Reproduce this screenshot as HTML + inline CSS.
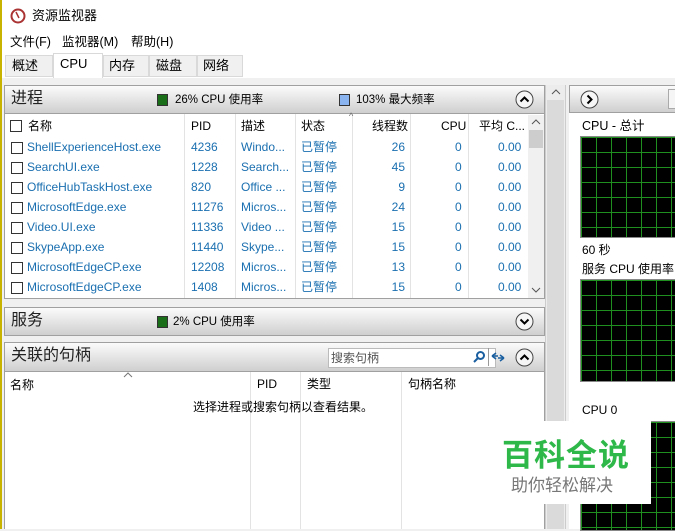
<!DOCTYPE html>
<html><head><meta charset="utf-8"><style>
*{margin:0;padding:0;box-sizing:border-box}
body{width:675px;height:529px;overflow:hidden;background:#f0f0f0;font-family:"Liberation Sans","Noto Sans CJK SC",sans-serif;font-size:12px;line-height:14px;color:#000;position:relative}
.a{position:absolute;white-space:nowrap}
.hdr{position:absolute;background:linear-gradient(#fbfbfb,#cfcfcf);border:1px solid #a0a0a0}
.hdr .t{position:absolute;left:6px;top:4px;font-size:16px;line-height:18px;color:#222}
.btn{position:absolute;width:19px;height:19px}
.row{position:absolute;left:5px;width:523px;height:20px;color:#1a6fb0}
.row span{position:absolute;top:2px}
.cb{position:absolute;width:12px;height:12px;border:1px solid #333;background:#fff}
.graph{position:absolute;background-color:#000;border:1px solid #888;background-image:linear-gradient(90deg,#1f8f1f 1px,transparent 1px),linear-gradient(#1f8f1f 1px,transparent 1px);background-size:15px 100%,100% 15px}
.vl{position:absolute;width:1px;background:#e3e3e3}
</style></head><body>
<svg width="0" height="0" style="position:absolute"><defs>
<symbol id="up" viewBox="0 0 19 19"><circle cx="9.5" cy="9.5" r="8.5" fill="#f6f6f6" stroke="#444"/><path d="M5.5 11.5 L9.5 7.5 L13.5 11.5" fill="none" stroke="#000" stroke-width="2"/></symbol>
<symbol id="dn" viewBox="0 0 19 19"><circle cx="9.5" cy="9.5" r="8.5" fill="#f6f6f6" stroke="#444"/><path d="M5.5 7.5 L9.5 11.5 L13.5 7.5" fill="none" stroke="#000" stroke-width="2"/></symbol>
<symbol id="rt" viewBox="0 0 19 19"><circle cx="9.5" cy="9.5" r="8.5" fill="#f6f6f6" stroke="#444"/><path d="M7.5 5.5 L11.5 9.5 L7.5 13.5" fill="none" stroke="#000" stroke-width="2"/></symbol>
</defs></svg>
<div class="a" style="left:0;top:0;width:675px;height:32px;background:#fff"></div>
<svg class="a" style="left:10px;top:8px" width="16" height="16"><circle cx="8" cy="8" r="6.5" fill="#fff" stroke="#a33" stroke-width="2"/><path d="M6 4 L9 10" stroke="#a33" stroke-width="1.5"/></svg>
<div class="a" style="left:32px;top:9px;font-size:13px">资源监视器</div>
<div class="a" style="left:0;top:32px;width:675px;height:20px;background:#fff"></div>
<div class="a" style="left:10px;top:35px;font-size:12.5px">文件(F)</div>
<div class="a" style="left:62px;top:35px;font-size:12.5px">监视器(M)</div>
<div class="a" style="left:131px;top:35px;font-size:12.5px">帮助(H)</div>
<div class="a" style="left:0;top:52px;width:675px;height:26px;background:#fff"></div>
<div class="a" style="left:5px;top:55px;width:48px;height:22px;background:#f0f0f0;border:1px solid #d9d9d9"></div>
<div class="a" style="left:12px;top:59px;font-size:13px">概述</div>
<div class="a" style="left:53px;top:53px;width:50px;height:25px;background:#fff;border:1px solid #d9d9d9;border-bottom:none"></div>
<div class="a" style="left:60px;top:57px;font-size:13px">CPU</div>
<div class="a" style="left:103px;top:55px;width:46px;height:22px;background:#f0f0f0;border:1px solid #d9d9d9"></div>
<div class="a" style="left:109px;top:59px;font-size:13px">内存</div>
<div class="a" style="left:149px;top:55px;width:48px;height:22px;background:#f0f0f0;border:1px solid #d9d9d9"></div>
<div class="a" style="left:156px;top:59px;font-size:13px">磁盘</div>
<div class="a" style="left:197px;top:55px;width:46px;height:22px;background:#f0f0f0;border:1px solid #d9d9d9"></div>
<div class="a" style="left:203px;top:59px;font-size:13px">网络</div>

<!-- processes -->
<div class="hdr" style="left:4px;top:85px;width:541px;height:29px"><div class="t">进程</div>
<div class="a" style="left:152px;top:8px;width:11px;height:12px;background:#1a6e1a;border:1px solid #333"></div>
<div class="a" style="left:170px;top:7px;font-size:11.5px">26% CPU 使用率</div>
<div class="a" style="left:334px;top:8px;width:11px;height:12px;background:#8ab4f0;border:1px solid #333"></div>
<div class="a" style="left:351px;top:7px;font-size:11.5px">103% 最大频率</div>
<svg class="btn" style="left:510px;top:4px"><use href="#up"/></svg></div>
<div class="a" style="left:4px;top:114px;width:541px;height:185px;background:#fff;border:1px solid #a0a0a0;border-top:none"></div>
<div class="vl" style="left:184px;top:114px;height:184px"></div>
<div class="vl" style="left:235px;top:114px;height:184px"></div>
<div class="vl" style="left:295px;top:114px;height:184px"></div>
<div class="vl" style="left:352px;top:114px;height:184px"></div>
<div class="vl" style="left:410px;top:114px;height:184px"></div>
<div class="vl" style="left:468px;top:114px;height:184px"></div>
<div class="cb" style="left:10px;top:120px"></div>
<div class="a" style="left:28px;top:119px">名称</div>
<div class="a" style="left:191px;top:119px">PID</div>
<div class="a" style="left:241px;top:119px">描述</div>
<div class="a" style="left:301px;top:119px">状态</div>
<div class="a" style="left:349px;top:109px;font-size:9px;color:#666">^</div>
<div class="a" style="left:372px;top:119px">线程数</div>
<div class="a" style="left:441px;top:119px">CPU</div>
<div class="a" style="left:479px;top:119px">平均 C...</div>
<div class="a" style="left:528px;top:115px;width:16px;height:183px;background:#f0f0f0"></div>
<div class="a" style="left:529px;top:130px;width:14px;height:18px;background:#cdcdcd"></div>
<svg class="a" style="left:531px;top:119px" width="10" height="6"><path d="M1 5 L5 1 L9 5" fill="none" stroke="#555"/></svg>
<svg class="a" style="left:531px;top:287px" width="10" height="6"><path d="M1 1 L5 5 L9 1" fill="none" stroke="#555"/></svg>

<div class="row" style="top:138px"><div class="cb" style="left:6px;top:4px"></div><span style="left:22px">ShellExperienceHost.exe</span><span style="left:186px">4236</span><span style="left:236px">Windo...</span><span style="left:296px">已暂停</span><span style="left:375px;width:25px;text-align:right">26</span><span style="left:450px">0</span><span style="left:493px">0.00</span></div>
<div class="row" style="top:158px"><div class="cb" style="left:6px;top:4px"></div><span style="left:22px">SearchUI.exe</span><span style="left:186px">1228</span><span style="left:236px">Search...</span><span style="left:296px">已暂停</span><span style="left:375px;width:25px;text-align:right">45</span><span style="left:450px">0</span><span style="left:493px">0.00</span></div>
<div class="row" style="top:178px"><div class="cb" style="left:6px;top:4px"></div><span style="left:22px">OfficeHubTaskHost.exe</span><span style="left:186px">820</span><span style="left:236px">Office ...</span><span style="left:296px">已暂停</span><span style="left:375px;width:25px;text-align:right">9</span><span style="left:450px">0</span><span style="left:493px">0.00</span></div>
<div class="row" style="top:198px"><div class="cb" style="left:6px;top:4px"></div><span style="left:22px">MicrosoftEdge.exe</span><span style="left:186px">11276</span><span style="left:236px">Micros...</span><span style="left:296px">已暂停</span><span style="left:375px;width:25px;text-align:right">24</span><span style="left:450px">0</span><span style="left:493px">0.00</span></div>
<div class="row" style="top:218px"><div class="cb" style="left:6px;top:4px"></div><span style="left:22px">Video.UI.exe</span><span style="left:186px">11336</span><span style="left:236px">Video ...</span><span style="left:296px">已暂停</span><span style="left:375px;width:25px;text-align:right">15</span><span style="left:450px">0</span><span style="left:493px">0.00</span></div>
<div class="row" style="top:238px"><div class="cb" style="left:6px;top:4px"></div><span style="left:22px">SkypeApp.exe</span><span style="left:186px">11440</span><span style="left:236px">Skype...</span><span style="left:296px">已暂停</span><span style="left:375px;width:25px;text-align:right">15</span><span style="left:450px">0</span><span style="left:493px">0.00</span></div>
<div class="row" style="top:258px"><div class="cb" style="left:6px;top:4px"></div><span style="left:22px">MicrosoftEdgeCP.exe</span><span style="left:186px">12208</span><span style="left:236px">Micros...</span><span style="left:296px">已暂停</span><span style="left:375px;width:25px;text-align:right">13</span><span style="left:450px">0</span><span style="left:493px">0.00</span></div>
<div class="row" style="top:278px"><div class="cb" style="left:6px;top:4px"></div><span style="left:22px">MicrosoftEdgeCP.exe</span><span style="left:186px">1408</span><span style="left:236px">Micros...</span><span style="left:296px">已暂停</span><span style="left:375px;width:25px;text-align:right">15</span><span style="left:450px">0</span><span style="left:493px">0.00</span></div>

<!-- services -->
<div class="hdr" style="left:4px;top:307px;width:541px;height:29px"><div class="t">服务</div>
<div class="a" style="left:152px;top:8px;width:11px;height:12px;background:#1a6e1a;border:1px solid #333"></div>
<div class="a" style="left:168px;top:7px;font-size:11.5px">2% CPU 使用率</div>
<svg class="btn" style="left:510px;top:4px"><use href="#dn"/></svg></div>

<!-- handles -->
<div class="hdr" style="left:4px;top:342px;width:541px;height:30px"><div class="t">关联的句柄</div>
<div class="a" style="left:323px;top:5px;width:168px;height:20px;background:#fff;border:1px solid #bbb"></div>
<div class="a" style="left:326px;top:8px;font-size:12px;color:#555">搜索句柄</div>
<svg class="a" style="left:467px;top:7px" width="14" height="14"><circle cx="8.5" cy="5.5" r="3.5" fill="none" stroke="#1a5fa0" stroke-width="2"/><path d="M6 8 L2 12" stroke="#1a5fa0" stroke-width="2"/></svg>
<div class="a" style="left:483px;top:5px;width:1px;height:18px;background:#999"></div>
<svg class="a" style="left:486px;top:7px" width="14" height="14"><path d="M1 6 L5 3 M1 6 L5 9 M1 6 H7 M13 8 L9 5 M13 8 L9 11 M13 8 H7" stroke="#1a5fa0" stroke-width="1.5" fill="none"/></svg>
<svg class="btn" style="left:510px;top:5px"><use href="#up"/></svg></div>
<div class="a" style="left:4px;top:372px;width:541px;height:157px;background:#fff;border-left:1px solid #a0a0a0;border-right:1px solid #a0a0a0"></div>
<div class="vl" style="left:250px;top:372px;height:157px"></div>
<div class="vl" style="left:300px;top:372px;height:157px"></div>
<div class="vl" style="left:401px;top:372px;height:157px"></div>
<svg class="a" style="left:123px;top:372px" width="10" height="6"><path d="M1 5 L5 1 L9 5" fill="none" stroke="#777"/></svg>
<div class="a" style="left:10px;top:378px">名称</div>
<div class="a" style="left:257px;top:377px">PID</div>
<div class="a" style="left:307px;top:377px">类型</div>
<div class="a" style="left:408px;top:377px">句柄名称</div>
<div class="a" style="left:193px;top:400px">选择进程或搜索句柄以查看结果。</div>

<!-- scrollbar middle -->
<div class="a" style="left:545px;top:85px;width:21px;height:444px;background:#ececec;border-left:1px solid #ccc;border-right:1px solid #ccc"></div>
<svg class="a" style="left:551px;top:89px" width="10" height="6"><path d="M1 5 L5 1 L9 5" fill="none" stroke="#555"/></svg>
<div class="a" style="left:547px;top:100px;width:17px;height:429px;background:#dadada"></div>

<!-- right -->
<div class="hdr" style="left:569px;top:85px;width:110px;height:28px">
<svg class="btn" style="left:10px;top:4px"><use href="#rt"/></svg>
<div class="a" style="left:98px;top:3px;width:20px;height:20px;background:#f5f5f5;border:1px solid #aaa"></div></div>
<div class="a" style="left:569px;top:113px;width:106px;height:416px;background:#fff"></div>
<div class="a" style="left:582px;top:119px;font-size:12.5px">CPU - 总计</div>
<div class="graph" style="left:580px;top:136px;width:100px;height:102px"></div>
<div class="a" style="left:582px;top:243px">60 秒</div>
<div class="a" style="left:582px;top:262px">服务 CPU 使用率</div>
<div class="graph" style="left:580px;top:279px;width:100px;height:103px"></div>
<div class="a" style="left:582px;top:403px">CPU 0</div>
<div class="graph" style="left:580px;top:421px;width:100px;height:110px"></div>

<!-- watermark -->
<div class="a" style="left:473px;top:421px;width:178px;height:83px;background:#fff"></div>
<div class="a" style="left:502px;top:438px;font-size:31px;line-height:36px;font-weight:bold;color:#2fb84a;letter-spacing:1px">百科全说</div>
<div class="a" style="left:511px;top:476px;font-size:17px;line-height:20px;color:#777">助你轻松解决</div>
<div class="a" style="left:0;top:0;width:2px;height:529px;background:#c8b400"></div>
</body></html>
